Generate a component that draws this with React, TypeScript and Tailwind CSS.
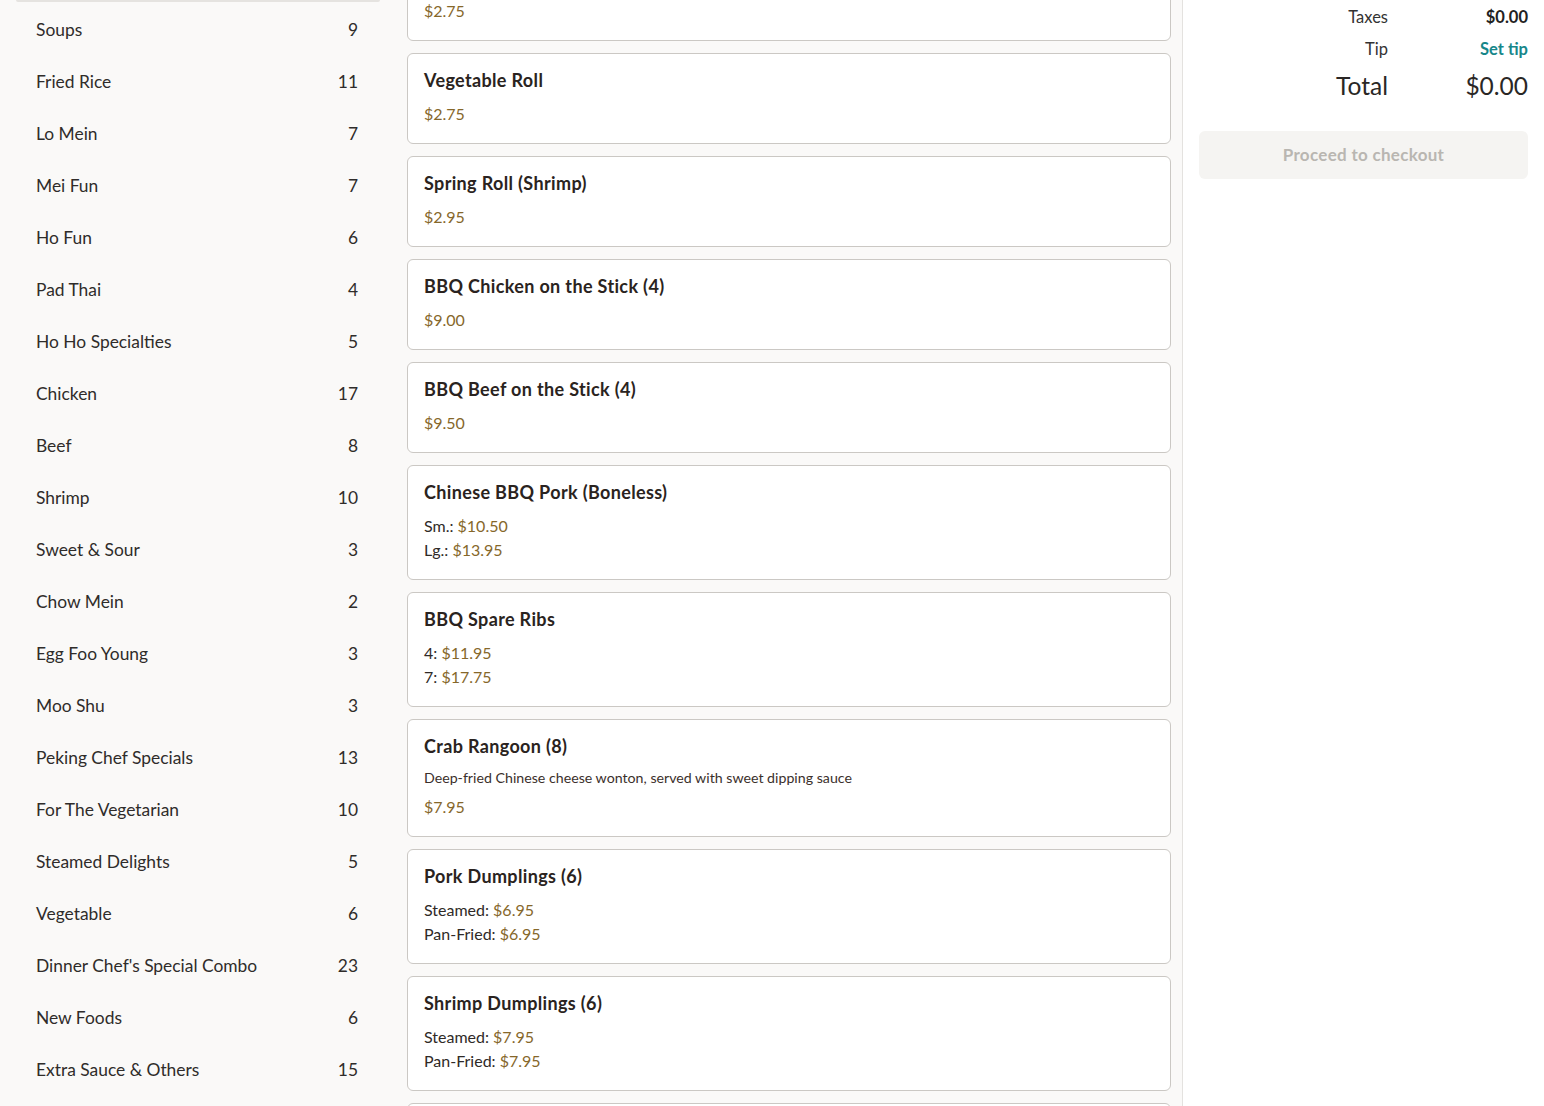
import React from 'react'

const CATEGORIES: [string, number][] = [
  ['Soups', 9],
  ['Fried Rice', 11],
  ['Lo Mein', 7],
  ['Mei Fun', 7],
  ['Ho Fun', 6],
  ['Pad Thai', 4],
  ['Ho Ho Specialties', 5],
  ['Chicken', 17],
  ['Beef', 8],
  ['Shrimp', 10],
  ['Sweet & Sour', 3],
  ['Chow Mein', 2],
  ['Egg Foo Young', 3],
  ['Moo Shu', 3],
  ['Peking Chef Specials', 13],
  ['For The Vegetarian', 10],
  ['Steamed Delights', 5],
  ['Vegetable', 6],
  ["Dinner Chef's Special Combo", 23],
  ['New Foods', 6],
  ['Extra Sauce & Others', 15],
]

type Item = { name: string; desc?: string; prices: { label?: string; value: string }[] }

const ITEMS: Item[] = [
  { name: 'Egg Roll', prices: [{ value: '$2.75' }] },
  { name: 'Vegetable Roll', prices: [{ value: '$2.75' }] },
  { name: 'Spring Roll (Shrimp)', prices: [{ value: '$2.95' }] },
  { name: 'BBQ Chicken on the Stick (4)', prices: [{ value: '$9.00' }] },
  { name: 'BBQ Beef on the Stick (4)', prices: [{ value: '$9.50' }] },
  { name: 'Chinese BBQ Pork (Boneless)', prices: [{ label: 'Sm.', value: '$10.50' }, { label: 'Lg.', value: '$13.95' }] },
  { name: 'BBQ Spare Ribs', prices: [{ label: '4', value: '$11.95' }, { label: '7', value: '$17.75' }] },
  { name: 'Crab Rangoon (8)', desc: 'Deep-fried Chinese cheese wonton, served with sweet dipping sauce', prices: [{ value: '$7.95' }] },
  { name: 'Pork Dumplings (6)', prices: [{ label: 'Steamed', value: '$6.95' }, { label: 'Pan-Fried', value: '$6.95' }] },
  { name: 'Shrimp Dumplings (6)', prices: [{ label: 'Steamed', value: '$7.95' }, { label: 'Pan-Fried', value: '$7.95' }] },
  { name: 'Vegetable Dumplings (6)', prices: [{ label: 'Steamed', value: '$6.95' }, { label: 'Pan-Fried', value: '$6.95' }] },
]

function MenuCard({ item, first }: { item: Item; first?: boolean }) {
  return (
    <div className={`bg-white border border-[#cbc8c4] rounded-[6px] pt-[14px] pb-[17px] px-4 ${first ? 'mt-[-50px]' : 'mt-3'}`}>
      <div className="text-[18px] leading-6 font-bold tracking-[0.35px] text-[#2a2320]">{item.name}</div>
      {item.desc && (
        <div className="mt-[10px] text-[14.2px] leading-5 text-[#3b302b]">{item.desc}</div>
      )}
      <div className={item.desc ? 'mt-[7px]' : 'mt-[10px]'}>
        {item.prices.map((p, i) => (
          <div key={i} className="text-[16px] leading-6 text-[#2f2a27]">
            {p.label && <span>{p.label}: </span>}
            <span className="text-[#86672a]">{p.value}</span>
          </div>
        ))}
      </div>
    </div>
  )
}

export default function App() {
  return (
    <div className="flex h-[1106px] overflow-hidden bg-[#faf9f8] text-[#2d2a28]" style={{ fontFamily: 'Lato, "Noto Sans", sans-serif' }}>
      <aside className="w-[396px] flex-shrink-0 px-4">
        <div className="h-[2px] bg-[#e5e3e0] rounded-b-md" />
        <div className="mt-[2px]">
          {CATEGORIES.map(([name, count]) => (
            <div key={name} className="h-[52px] flex items-center justify-between pl-5 pr-[22px] text-[17.4px] text-[#2f2c2a]">
              <span>{name}</span>
              <span>{count}</span>
            </div>
          ))}
        </div>
      </aside>

      <main className="w-[787px] flex-shrink-0 px-[11px] border-r border-[#e4e2df]">
        {ITEMS.map((item, i) => (
          <MenuCard key={item.name} item={item} first={i === 0} />
        ))}
      </main>

      <section className="flex-1 bg-white px-4">
        <div className="pt-[5px]">
          <div className="flex h-6 items-center text-[16.5px]">
            <div className="flex-1 text-right text-[#333]">Taxes</div>
            <div className="w-[140px] text-right font-bold text-[#222]">$0.00</div>
          </div>
          <div className="flex h-6 items-center text-[16.5px] mt-2">
            <div className="flex-1 text-right text-[#333]">Tip</div>
            <div className="w-[140px] text-right font-bold text-[#17878a]">Set tip</div>
          </div>
          <div className="flex h-7 items-center text-[24.5px] mt-[11px]">
            <div className="flex-1 text-right text-[#2a2725]">Total</div>
            <div className="w-[140px] text-right text-[#2a2725]">$0.00</div>
          </div>
        </div>
        <button className="mt-[31px] w-full h-12 rounded-[6px] bg-[#f5f4f2] text-[17px] font-bold tracking-[0.3px] text-[#b9b6b1]">
          Proceed to checkout
        </button>
      </section>
    </div>
  )
}
